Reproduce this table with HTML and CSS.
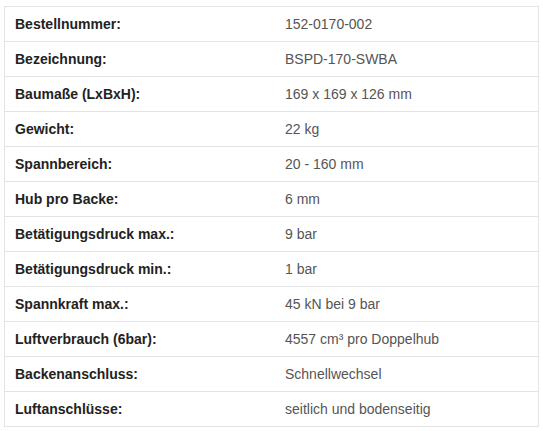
FILE: index.html
```html
<!DOCTYPE html>
<html lang="de">
<head>
<meta charset="utf-8">
<link rel="stylesheet" href="styles.css">
</head>
<body>
<div class="spec">
  <div class="row"><div class="label">Bestellnummer:</div><div class="value">152-0170-002</div></div>
  <div class="row"><div class="label">Bezeichnung:</div><div class="value">BSPD-170-SWBA</div></div>
  <div class="row"><div class="label">Baumaße (LxBxH):</div><div class="value">169 x 169 x 126 mm</div></div>
  <div class="row"><div class="label">Gewicht:</div><div class="value">22 kg</div></div>
  <div class="row"><div class="label">Spannbereich:</div><div class="value">20 - 160 mm</div></div>
  <div class="row"><div class="label">Hub pro Backe:</div><div class="value">6 mm</div></div>
  <div class="row"><div class="label">Betätigungsdruck max.:</div><div class="value">9 bar</div></div>
  <div class="row"><div class="label">Betätigungsdruck min.:</div><div class="value">1 bar</div></div>
  <div class="row"><div class="label">Spannkraft max.:</div><div class="value">45 kN bei 9 bar</div></div>
  <div class="row"><div class="label">Luftverbrauch (6bar):</div><div class="value">4557 cm³ pro Doppelhub</div></div>
  <div class="row"><div class="label">Backenanschluss:</div><div class="value">Schnellwechsel</div></div>
  <div class="row"><div class="label">Luftanschlüsse:</div><div class="value">seitlich und bodenseitig</div></div>
</div>
</body>
</html>
```
FILE: styles.css
```css
html, body {
  margin: 0;
  padding: 0;
  background: #ffffff;
}
body {
  padding: 6px 5px 0 4px;
  font-family: "Liberation Sans", Arial, sans-serif;
  font-size: 14px;
}
.spec {
  width: 535px;
  box-sizing: border-box;
  border: 1px solid #e3e3e3;
}
.row {
  display: grid;
  grid-template-columns: 270px 1fr;
  height: 34px;
  align-items: center;
  border-top: 1px solid #e3e3e3;
}
.row:first-child {
  border-top: none;
}
.label {
  padding-left: 10px;
  font-weight: bold;
  color: #222222;
}
.value {
  padding-left: 10px;
  color: #555555;
}
```
